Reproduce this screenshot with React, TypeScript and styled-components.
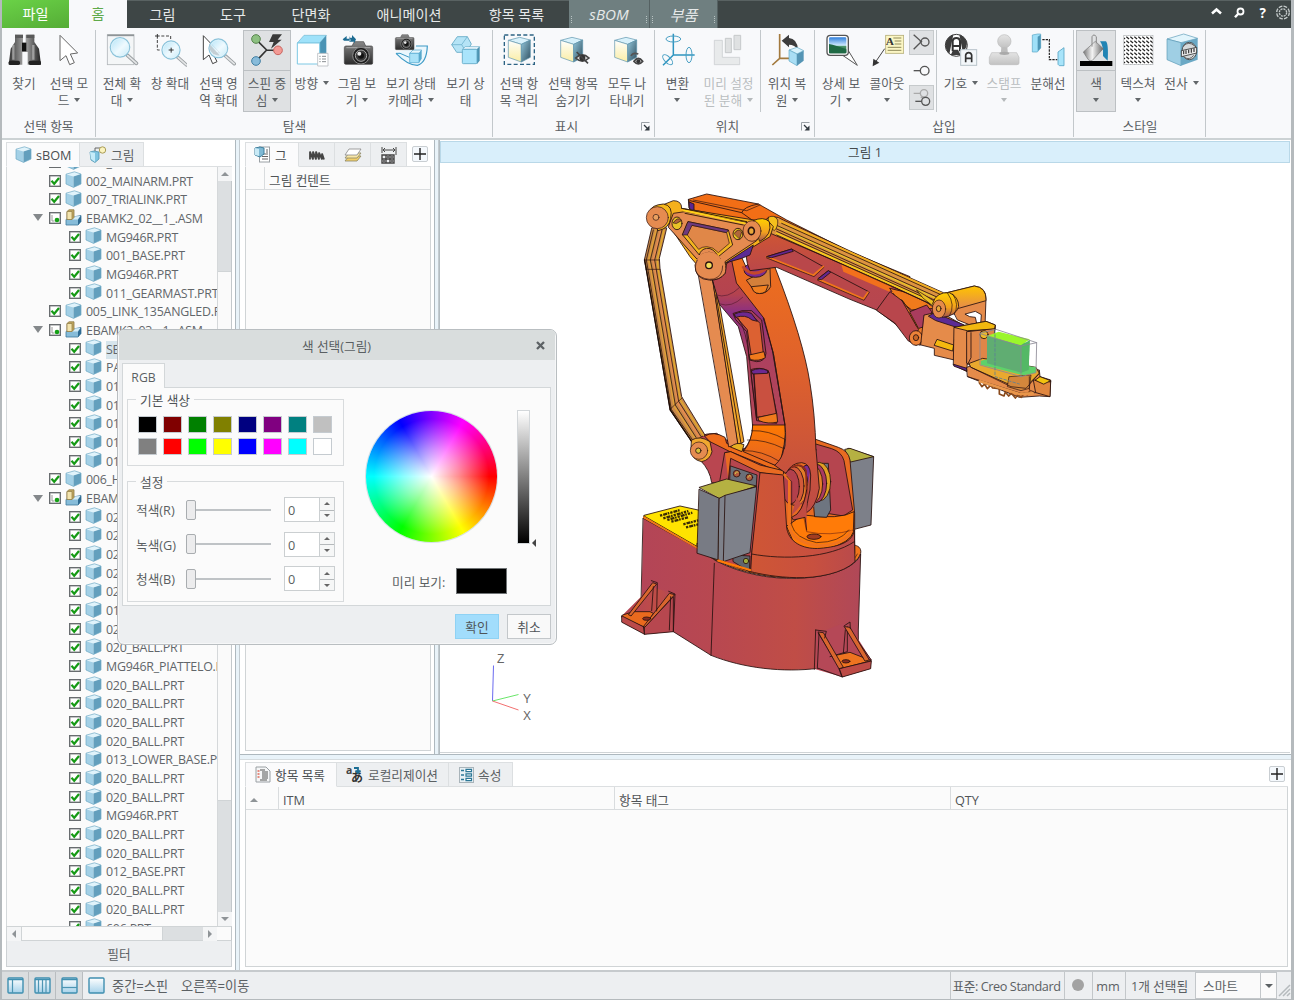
import React from 'react';
import styled, { createGlobalStyle, css } from 'styled-components';

const Global = createGlobalStyle`
  * { box-sizing: border-box; }
  body { margin: 0; overflow: hidden; }
`;

const Win = styled.div`
  width: 1294px; height: 1000px; display: flex; flex-direction: column; overflow: hidden;
  background: #fff; border-left: 2px solid #b5babd; border-right: 3px solid #b5babd; border-bottom: 1px solid #b5babd;
  font-family: "Open Sans", "Noto Sans CJK KR", sans-serif; font-size: 12.7px; color: #5b6063; white-space: nowrap;
`;

/* ---------- menu bar ---------- */
const MenuBar = styled.nav`
  height: 28px; flex: none; display: flex; background: #3e4646; border-top: 1px solid #596262; color: #e6e9e9; font-size: 14.1px;
`;
const MenuTab = styled.div<{ $w: number; $kind?: 'file' | 'active' | 'ctx' }>`
  width: ${p => p.$w}px; display: flex; align-items: center; justify-content: center; padding-bottom: 2px;
  ${p => p.$kind === 'file' && css`background: linear-gradient(165deg, #6ad247, #55ac36); margin-top: -1px; color: #fff;`}
  ${p => p.$kind === 'active' && css`background: #f8f9fb; margin-top: -1px; color: #5faa4a;`}
  ${p => p.$kind === 'ctx' && css`
    background: #6f7f80; font-style: italic; font-size: 15.2px; padding-bottom: 0; margin-top: -1px; border-right: 1px solid #556162; position: relative;
    &::before, &::after { content: ''; position: absolute; bottom: 5px; height: 7px; border-left: 1px dotted #b9c3c3; left: 2px; }
    &::after { left: auto; right: 2px; }
  `}
`;
const MenuTools = styled.div`margin-left: auto; display: flex; svg { display: block; }`;

/* ---------- ribbon ---------- */
const Ribbon = styled.div`height: 110px; flex: none; display: flex; background: #f8f9fb; padding-top: 2px;`;
const Group = styled.section<{ $w: number; $pad?: number }>`
  width: ${p => p.$w}px; flex: none; height: 107px; display: flex; flex-direction: column; border-right: 1px solid #c3c8cb;
  padding-left: ${p => p.$pad ?? 0}px;
`;
const Tools = styled.div`display: flex; height: 82px;`;
const GroupTitle = styled.div<{ $pad?: number; $launch?: boolean }>`
  height: 25px; display: flex; align-items: center; justify-content: center; padding: 2px ${p => (p.$launch ? 14 : 0)}px 0 0;
  margin-left: -${p => p.$pad ?? 0}px; position: relative;
`;
const Launcher = styled.span`
  position: absolute; right: 4px; top: 10px; width: 9px; height: 9px; display: flex;
  svg { display: block; }
`;
const ToolBtn = styled.div<{ $w: number; $on?: boolean; $off?: boolean }>`
  width: ${p => p.$w}px; height: 82px; flex: none; display: flex; flex-direction: column; align-items: center;
  ${p => p.$on && css`background: #dfe1e3; box-shadow: inset 0 0 0 1px #bcc0c3;`}
  ${p => p.$off && css`color: #b9bdbf;`}
`;
const IconBox = styled.div<{ $on?: boolean }>`
  height: 41px; width: 100%; padding-top: 3px; display: flex; justify-content: center; flex: none;
  ${p => p.$on && css`border-bottom: 1px solid #bcc0c3;`}
  svg { display: block; }
`;
const Label = styled.div`margin-top: 4px; height: 33px; display: flex; flex-direction: column; align-items: center;`;
const Line = styled.div`height: 16.5px; line-height: 16.5px; display: flex; align-items: center;`;
const Caret = styled.i<{ $off?: boolean; $gap?: number }>`
  width: 0; height: 0; border: 3.5px solid transparent; border-bottom: 0; border-top: 4.5px solid ${p => (p.$off ? '#b5b9bb' : '#62676a')};
  margin-left: ${p => p.$gap ?? 5}px;
`;
const ToolSep = styled.div<{ $l: number; $r: number }>`width: 1px; background: #c3c8cb; margin: 0 ${p => p.$r}px 0 ${p => p.$l}px;`;
const Stack = styled.div`width: 25px; margin-left: 2px; display: flex; flex-direction: column; justify-content: space-between; height: 80px;`;
const StackBtn = styled.div<{ $on?: boolean }>`
  height: 25px; ${p => p.$on && css`background: #dfe1e3; box-shadow: inset 0 0 0 1px #c6cacc;`} svg { display: block; }
`;

const Icon = ({ cx, children }: { cx: number; children: React.ReactNode }) => (
  <svg width="34" height="34" viewBox={`${cx - 51} 99 102 102`} fill="none">{children}</svg>
);

type ToolProps = { w: number; cx: number; l1: string; l2?: string; c1?: boolean; c2?: boolean; on?: boolean; off?: boolean; children: React.ReactNode };
const Tool = ({ w, cx, l1, l2, c1, c2, on, off, children }: ToolProps) => (
  <ToolBtn $w={w} $on={on} $off={off}>
    <IconBox $on={on}><Icon cx={cx}>{children}</Icon></IconBox>
    <Label>
      <Line>{l1}{c1 && <Caret $off={off} />}</Line>
      <Line>{l2}{c2 && <Caret $off={off} $gap={l2 ? 5 : 0} />}</Line>
    </Label>
  </ToolBtn>
);

const Launch = () => (
  <Launcher><svg width="9" height="9" viewBox="0 0 9 9" fill="none"><path d="M.5 8.5V.5h8" stroke="#9aa0a6" /><path d="M3 3l4 4" stroke="#333a40" strokeWidth="1.3" /><path d="M8.500 3.500v5h-5z" fill="#333a40" /></svg></Launcher>
);

const DefsSvg = styled.svg`position: absolute; width: 0; height: 0;`;
const Defs = () => (
  <DefsSvg>
    <defs>
      <linearGradient id="blk" x1="0" x2="1"><stop offset="0" stopColor="#333" /><stop offset=".5" stopColor="#aaa" /><stop offset="1" stopColor="#222" /></linearGradient>
      <linearGradient id="blkv" x1="0" x2="0" y1="0" y2="1"><stop offset="0" stopColor="#888" /><stop offset="1" stopColor="#2c2c2c" /></linearGradient>
      <linearGradient id="lens" x1="0" y1="0" x2="1" y2="1"><stop offset="0" stopColor="#a9e0f6" /><stop offset=".55" stopColor="#eefaff" /><stop offset="1" stopColor="#bfe8f7" /></linearGradient>
      <linearGradient id="cubeR" x1="0" y1="0" x2="1" y2="1"><stop offset="0" stopColor="#93c6da" /><stop offset="1" stopColor="#2f4f60" /></linearGradient>
      <linearGradient id="cubeL" x1="0" y1="0" x2="0" y2="1"><stop offset="0" stopColor="#ffffff" /><stop offset=".35" stopColor="#fdf8dc" /><stop offset="1" stopColor="#fbeea6" /></linearGradient>
      <linearGradient id="grey" x1="0" y1="0" x2="0" y2="1"><stop offset="0" stopColor="#e4e4e4" /><stop offset="1" stopColor="#c2c2c2" /></linearGradient>
      <linearGradient id="bucket" x1="0" y1="0" x2="1" y2="0"><stop offset="0" stopColor="#777" /><stop offset=".45" stopColor="#f4f4f4" /><stop offset="1" stopColor="#666" /></linearGradient>
      <linearGradient id="sky" x1="0" y1="0" x2="0" y2="1"><stop offset="0" stopColor="#2f7fdc" /><stop offset=".5" stopColor="#cfeaff" /><stop offset=".55" stopColor="#4f9b6e" /><stop offset="1" stopColor="#184b33" /></linearGradient>
      <pattern id="hatch" width="12" height="12" patternUnits="userSpaceOnUse"><path d="M1 2l8 7" stroke="#222" strokeWidth="4" /></pattern>
      <linearGradient id="mini" x1="0" y1="0" x2="0" y2="1"><stop offset="0" stopColor="#fff" /><stop offset="1" stopColor="#a6d2ea" /></linearGradient>
    </defs>
  </DefsSvg>
);

const Magnifier = ({ x, y, r = 28 }: { x: number; y: number; r?: number }) => (
  <g>
    <path d={`M${x + r * 0.75} ${y + r * 0.8}l${r * 0.95} ${r * 0.85}`} stroke="#9a9fa2" strokeWidth={r * 0.38} strokeLinecap="round" />
    <path d={`M${x + r * 0.8} ${y + r * 0.85}l${r * 0.9} ${r * 0.8}`} stroke="#e4e6e7" strokeWidth={r * 0.18} strokeLinecap="round" />
    <circle cx={x} cy={y} r={r} fill="url(#lens)" fillOpacity=".9" stroke="#8cc3da" strokeWidth="4" />
    <circle cx={x} cy={y} r={r - 3} stroke="#dff4fc" strokeWidth="2.500" />
  </g>
);
const Camera = ({ x, y, s = 1 }: { x: number; y: number; s?: number }) => (
  <g transform={`translate(${x} ${y}) scale(${s})`}>
    <path d="M0 18q0-5 5-5h18l7-13h28l6 13h17q4 0 4 5v46q0 4-4 4H5q-5 0-5-4z" fill="url(#blkv)" stroke="#444" strokeWidth="2" />
    <path d="M6 18h72" stroke="#aaa" strokeWidth="3" />
    <circle cx="50" cy="42" r="25" fill="#1d1d1d" stroke="#8a8a8a" strokeWidth="3" /><circle cx="50" cy="42" r="17" fill="#3b3b3b" stroke="#aaa" strokeWidth="3" />
    <circle cx="50" cy="42" r="9" fill="#111" /><circle cx="45" cy="36" r="6" fill="#e9e9e9" />
  </g>
);
const Shaded = ({ x }: { x: number }) => (
  <g stroke="#5b93ab" strokeWidth="2" strokeLinejoin="round">
    <path d={`M${x} 121l34-9 32 8-27 13z`} fill="#d8f1fb" /><path d={`M${x} 121l39 12v53l-39-14z`} fill="url(#cubeL)" />
    <path d={`M${x + 39} 133l27-13v52l-27 14z`} fill="url(#cubeR)" />
  </g>
);

const RibbonBar = () => (
  <Ribbon>
    <Group $w={94}>
      <Tools>
        <Tool w={44} cx={72} l1="찾기">
          <path d="M45 104h24v24h8v-24h26v22l14 20 6 48H83v-38H67v38H26l6-48 13-20z" fill="url(#blk)" />
          <path d="M45 104h24v10H45zM79 104h24v10H79z" fill="#5a5a5a" /><path d="M66 128h13v26H66z" fill="#111" />
          <rect x="26" y="182" width="34" height="13" rx="5" fill="#222" /><rect x="86" y="182" width="37" height="13" rx="5" fill="#222" />
          <path d="M40 135v44M100 135v44" stroke="#c8c8c8" strokeWidth="7" opacity=".6" />
        </Tool>
        <Tool w={46} cx={207} l1="선택 모" l2="드" c2>
          <path d="M180 106v76l18-15 11 27 14-6-12-26 22-3z" fill="#fff" stroke="#666" strokeWidth="3" />
        </Tool>
      </Tools>
      <GroupTitle>선택 항목</GroupTitle>
    </Group>
    <Group $w={397} $pad={2}>
      <Tools>
        <Tool w={48} cx={366} l1="전체 확" l2="대" c2>
          <rect x="322" y="104" width="80" height="90" fill="#f4f6f7" stroke="#b2b7ba" strokeWidth="2.500" /><path d="M322 106h80" stroke="#8f9497" strokeWidth="5" /><Magnifier x={360} y={142} r={29} />
        </Tool>
        <Tool w={48} cx={510} l1="창 확대">
          <path d="M472 102v14M465 108h14" stroke="#333" strokeWidth="3" /><path d="M484 108h28v10M472 120v30h12" stroke="#444" strokeWidth="3" strokeDasharray="9 5" />
          <Magnifier x={513} y={150} r={27} /><path d="M506 150h15M513.500 143v15" stroke="#333" strokeWidth="3" />
        </Tool>
        <Tool w={49} cx={658} l1="선택 영" l2="역 확대">
          <path d="M611 107v72l17-14 11 26 13-6-12-24 20-3z" fill="#fff" stroke="#444" strokeWidth="3" /><Magnifier x={656} y={145} r={28} />
          <path d="M630 133l30 33a28 28 0 0 1-30-18z" fill="#bcc6ca" opacity=".8" />
        </Tool>
        <Tool w={48} cx={801} l1="스핀 중" l2="심" c2 on>
          <path d="M768 118l32 32 32 1M800 150l-30 32" stroke="#333" strokeWidth="5" />
          <path d="M818 103h28l-13 16h12l-32 27 8-20h-14z" fill="#3a3a3a" />
          <circle cx="768" cy="117" r="13" fill="#8dc081" stroke="#58854e" strokeWidth="3" /><circle cx="834" cy="151" r="13" fill="#f39a95" stroke="#c96660" strokeWidth="3" /><circle cx="768" cy="183" r="13" fill="#88bbda" stroke="#427fa3" strokeWidth="3" />
        </Tool>
        <Tool w={42} cx={936} l1="방향" c1>
          <path d="M892 129l20-23h67l-20 23z" fill="#9fe2fa" stroke="#73b8d2" strokeWidth="2" /><path d="M959 129l20-23v62l-20 24z" fill="#4a93b4" /><path d="M892 129h67v63h-67z" fill="#fff" stroke="#7cc8e4" strokeWidth="3" />
          <path d="M953 160h31v38h-31z" fill="#fff" stroke="#b9bdc0" strokeWidth="2.500" /><path d="M958 169h4m4 0h12m-20 8h4m4 0h12m-20 8h4m4 0h12" stroke="#8a8f92" strokeWidth="3" />
        </Tool>
        <Tool w={48} cx={1071} l1="그림 보" l2="기" c2>
          <Camera x={1033} y={125} />
          <path d="M1028 118l12-10v8h8v-8l4 14h-20zM1068 118l-12-13v8h-6l-2 12h14v6z" fill="#1e6c92" />
        </Tool>
        <Tool w={60} cx={1233} l1="보기 상태" l2="카메라" c2>
          <path d="M1188 160q35 36 64 36 28-8 30-58h-34" fill="#eaf7fd" stroke="#3c9ac6" strokeWidth="3.500" /><path d="M1188 160h12l28 12" stroke="#3c9ac6" strokeWidth="3" />
          <path d="M1229 160l10-10h26l-8 10z" fill="#e5f7fd" stroke="#4ba4cd" strokeWidth="2" /><path d="M1229 160h28v28h-28z" fill="#a9e2f8" stroke="#4ba4cd" strokeWidth="2" /><path d="M1257 160l8-10v26l-8 12z" fill="#57a9cc" />
          <Camera x={1186} y={104} s={0.66} />
        </Tool>
        <Tool w={49} cx={108} l1="보기 상" l2="태">
          <path d="M65 134l17-24h30l12 22-15 25H80z" fill="#b5e4f6" stroke="#5fa7c4" strokeWidth="2.500" /><path d="M65 134h30l17-24M95 134l14 23" stroke="#5fa7c4" strokeWidth="2" />
          <path d="M97 148l9-8h43l-8 8z" fill="#effaff" stroke="#5fa7c4" strokeWidth="2" /><path d="M141 148l8-8v42l-8 10z" fill="#4c93b2" /><rect x="97" y="148" width="44" height="43" rx="3" fill="#a9e4fb" stroke="#5fa7c4" strokeWidth="2.500" />
        </Tool>
      </Tools>
      <GroupTitle $pad={1}>탐색</GroupTitle>
    </Group>
    <Group $w={162}>
      <Tools>
        <Tool w={52} cx={267} l1="선택 항" l2="목 격리"><rect x="223" y="105" width="90" height="88" stroke="#2c6384" strokeWidth="4" strokeDasharray="12 7" /><Shaded x={235} /></Tool>
        <Tool w={56} cx={429} l1="선택 항목" l2="숨기기">
          <Shaded x={392} /><path d="M437 174q20-19 40 0-20 19-40 0z" fill="#ddd" stroke="#444" strokeWidth="5" /><circle cx="457" cy="174" r="9" fill="#333" /><path d="M440 156l34 34" stroke="#444" strokeWidth="5" />
        </Tool>
        <Tool w={52} cx={591} l1="모두 나" l2="타내기">
          <Shaded x={554} /><path d="M603 168q6-12 22-6" stroke="#555" strokeWidth="5" /><path d="M612 184q13-18 26 0-13 15-26 0z" fill="#ddd" stroke="#444" strokeWidth="5" /><circle cx="625" cy="184" r="6" fill="#333" />
        </Tool>
      </Tools>
      <GroupTitle $launch>표시<Launch /></GroupTitle>
    </Group>
    <Group $w={160}>
      <Tools>
        <Tool w={45} cx={741} l1="변환" c2>
          <path d="M727 101v64h64M727 165l-31 31" stroke="#2e95c0" strokeWidth="4.500" /><ellipse cx="727" cy="117" rx="22" ry="9" stroke="#4aa0c4" strokeWidth="3" /><ellipse cx="774" cy="165" rx="9" ry="23" stroke="#4aa0c4" strokeWidth="3" />
          <ellipse cx="710" cy="179" rx="19" ry="9" stroke="#4aa0c4" strokeWidth="3" transform="rotate(45 710 179)" />
        </Tool>
        <Tool w={57} cx={894} l1="미리 설정" l2="된 분해" c2 off>
          <path d="M850 121h24v51h52v22h-76z" fill="#e8eaeb" stroke="#cdd0d2" strokeWidth="2.500" /><path d="M883 115h18v43h-18zM909 106h20v43h-20z" fill="#dfe1e2" stroke="#c6c9cb" strokeWidth="3" />
        </Tool>
        <ToolSep $l={3} $r={0} />
        <Tool w={52} cx={1071} l1="위치 복" l2="원" c2>
          <path d="M1049 102v73h55M1049 175l-22 20" stroke="#a37a3e" strokeWidth="5" /><path d="M1055 122l22-18v10q24 2 27 34-10-14-27-14v8z" fill="#3d3d3d" />
          <path d="M1077 150l24-8 20 10-20 10z" fill="#d9f3fd" stroke="#5fa7c4" strokeWidth="2" /><path d="M1077 150l24 12v35l-24-14z" fill="#a9def5" stroke="#5fa7c4" strokeWidth="2" /><path d="M1101 162l20-10v30l-20 15z" fill="#5595b5" />
        </Tool>
      </Tools>
      <GroupTitle $launch>위치<Launch /></GroupTitle>
    </Group>
    <Group $w={259}>
      <Tools>
        <Tool w={52} cx={1233} l1="상세 보" l2="기" c2>
          <path d="M1238 166l44 30-27-44" fill="#fff" stroke="#555" strokeWidth="3" /><rect x="1191" y="106" width="64" height="60" rx="10" fill="#fff" stroke="#555" strokeWidth="4" /><rect x="1197" y="112" width="52" height="48" rx="4" fill="url(#sky)" /><path d="M1197 132q20 4 52 16v12h-52z" fill="#1f6a45" />
        </Tool>
        <Tool w={40} cx={99} l1="콜아웃" c2>
          <rect x="95" y="106" width="54" height="54" fill="#fbf6c4" stroke="#b5ae79" strokeWidth="2.500" /><path d="M118 114h24M122 123h20M122 132h20M101 142h41M101 151h41" stroke="#8f8a5a" strokeWidth="3" />
          <text x="95" y="136" fontFamily="Liberation Serif" fontWeight="bold" fontSize="34" fill="#333">A</text><path d="M92 146l-26 38" stroke="#444" strokeWidth="3" /><path d="M56 199l2-23 18 12z" fill="#333" />
        </Tool>
        <Stack>
          <StackBtn $on><svg width="25" height="25" viewBox="165 90 75 75" fill="none" stroke="#555" strokeWidth="4"><path d="M179 104l22 20h-4M179 148l22-22" /><circle cx="213" cy="126" r="12" /></svg></StackBtn>
          <StackBtn><svg width="25" height="25" viewBox="165 173 75 75" fill="none" stroke="#555" strokeWidth="4"><path d="M179 211h20" /><circle cx="212" cy="211" r="13" /></svg></StackBtn>
          <StackBtn $on><svg width="25" height="25" viewBox="165 255 75 75" fill="none" strokeWidth="4"><path d="M179 280h20M200 292l10 2" stroke="#aaa" /><circle cx="210" cy="280" r="11" stroke="#aaa" /><path d="M184 304h20" stroke="#555" /><circle cx="215" cy="304" r="12" stroke="#555" fill="#dfe1e3" /></svg></StackBtn>
        </Stack>
        <ToolSep $l={2} $r={3} />
        <Tool w={42} cx={321} l1="기호" c1>
          <circle cx="307" cy="136" r="33" fill="#fff" stroke="#3d3d3d" strokeWidth="3" /><path d="M276 125q8-18 22-21l-12 58q-16-16-10-37zM338 125q-8-18-22-21l10 50q16-12 12-29zM290 165h30l-8-16h-14z" fill="#3d3d3d" />
          <path d="M296 154v-32q2-8 11-8t11 8v32M296 138h22" stroke="#333" strokeWidth="6" /><rect x="320" y="149" width="48" height="47" fill="#f3f7fa" stroke="#b8c3ca" strokeWidth="3" /><path d="M335 187v-22q2-7 9-7t9 7v22M335 175h18" stroke="#333" strokeWidth="5" />
        </Tool>
        <Tool w={44} cx={450} l1="스탬프" c2 off>
          <circle cx="451" cy="124" r="20" fill="url(#grey)" stroke="#bbb" strokeWidth="2" /><path d="M442 142h18l2 22h-22z" fill="#bdbdbd" /><path d="M413 158h75l7 14v17q0 5-6 5h-77q-6 0-6-5v-17z" fill="url(#grey)" stroke="#bdbdbd" strokeWidth="2" /><ellipse cx="451" cy="160" rx="15" ry="5" fill="#aaa" />
        </Tool>
        <Tool w={44} cx={582} l1="분해선">
          <path d="M535 105l16-3h9v42l-10 12h-15z" fill="#9fe0f8" stroke="#57a5c4" strokeWidth="2" /><path d="M551 110l9-6v40l-9 10z" fill="#4d96b6" /><path d="M565 119h21v60h24" stroke="#222" strokeWidth="3.500" strokeDasharray="7 3" /><path d="M612 156l18-13v54h-14l-4-4z" fill="#a8e4fa" stroke="#57a5c4" strokeWidth="2.500" />
        </Tool>
      </Tools>
      <GroupTitle>삽입</GroupTitle>
    </Group>
    <Group $w={132} $pad={2}>
      <Tools>
        <Tool w={40} cx={726} l1="색" c2 on>
          <path d="M738 124h18q8 8 5 58l-14-14q2-30-9-44z" fill="#2184b4" /><path d="M688 156l36-32 24 22-34 36q-6 3-12-4z" fill="url(#bucket)" stroke="#777" strokeWidth="2" /><path d="M714 140v-30q5-10 13 0v20" stroke="#888" strokeWidth="3" /><rect x="678" y="183" width="97" height="15" fill="#000" />
        </Tool>
        <Tool w={44} cx={852} l1="텍스쳐" c2><rect x="809" y="106" width="88" height="88" fill="#fff" stroke="#b6babc" strokeWidth="2" /><rect x="810" y="107" width="86" height="86" fill="url(#hatch)" /></Tool>
        <Tool w={43} cx={981} l1="전사" c1>
          <path d="M936 117l50-15 42 13-50 13z" fill="#e2f5fc" stroke="#5a9ab6" strokeWidth="2" /><path d="M936 117l42 11v69l-42-18z" fill="#9fcfe4" stroke="#5a9ab6" strokeWidth="2" /><path d="M978 128l50-13v64l-50 18z" fill="#6ba9c5" />
          <ellipse cx="1003" cy="153" rx="22" ry="26" fill="#d5d9da" stroke="#4a4f52" strokeWidth="3" /><path d="M979 152l46-10v17l-46 11z" fill="#eee" stroke="#333" strokeWidth="2.500" /><path d="M986 152v11M993 151v11M1001 149v11M1009 147v11M1017 145v11" stroke="#333" strokeWidth="3.500" /><path d="M985 138q16-16 34 0M988 172q16 10 28-6" stroke="#666" strokeWidth="3" />
        </Tool>
      </Tools>
      <GroupTitle $pad={1}>스타일</GroupTitle>
    </Group>
  </Ribbon>
);

/* ---------- shared panel parts ---------- */
const Body = styled.main`flex: 1; min-height: 0; display: flex; border-top: 2px solid #ccd2d4;`;
const TabStrip = styled.div<{ $h?: number }>`height: ${p => p.$h ?? 26}px; flex: none; display: flex; align-items: stretch;`;
const Tab = styled.div<{ $w: number; $on?: boolean; $dx?: number }>`
  width: ${p => p.$w}px; display: flex; align-items: center; gap: 4px; padding-left: ${p => p.$dx ?? 8}px; overflow: hidden; flex: none;
  background: #edeff1; border: 1px solid #dcdfe1; border-left: 0;
  ${p => p.$on && css`background: #fbfbfc; border-bottom-color: #fbfbfc; border-left: 1px solid #dcdfe1; color: #4b4f52;`}
`;
const TabFill = styled.div`flex: 1; border-bottom: 1px solid #dcdfe1; display: flex; justify-content: flex-end; align-items: center;`;
const PlusBox = styled.div<{ $r?: number }>`
  width: 16px; height: 16px; border: 1px solid #c9ced2; background: #f5f9fd; border-radius: 2px; margin-right: ${p => p.$r ?? 0}px; margin-bottom: 1px;
  svg { display: block; }
`;
const Plus = ({ r }: { r?: number }) => (
  <PlusBox $r={r}><svg width="14" height="14" viewBox="0 0 14 14"><path d="M7 1v12M1 7h12" stroke="#222" strokeWidth="1.400" /></svg></PlusBox>
);
const VSplit = styled.div`width: 5px; flex: none; background: #e9f3f9; border-left: 1px solid #aeb8be; border-right: 1px solid #c3cbd0;`;
const HSplit = styled.div`height: 6px; flex: none; background: #e9f3f9; border-top: 1px solid #aeb8be; border-bottom: 1px solid #d6dcdf;`;

const Cube = ({ s = 17 }: { s?: number }) => (
  <svg width={s} height={s} viewBox="0 0 17 17">
    <path d="M1 3.200L9.500.8 16 3l-7.500 2.600z" fill="#e0f3fb" /><path d="M1 3.200l7.500 2.400V16.400L1 13z" fill="#a3d0e6" /><path d="M8.500 5.600L16 3v10l-7.500 3.400z" fill="#639fbd" />
    <path d="M1 3.200L9.500.8 16 3v10l-7.500 3.400L1 13z" fill="none" stroke="#6fa9c4" strokeWidth=".7" />
  </svg>
);
const Asm = () => (
  <svg width="17" height="17" viewBox="0 0 17 17">
    <path d="M1 10.500L8 8l8-1.500v6L13 16H1z" fill="#86bcd9" stroke="#3d789c" strokeWidth=".8" /><path d="M1.500 10.500L9 7.500l6.500-.5-2.500 3.500z" fill="#d4edf9" /><path d="M13 10.500l3-4v6L13 16z" fill="#2f6b93" />
    <path d="M2 2.500L4 .8h5v7.700l-2 2H2z" fill="#c4a95f" stroke="#8d7a45" strokeWidth=".8" /><path d="M2 2.500h5v8H2z" fill="#f3e4ad" stroke="#8d7a45" strokeWidth=".7" />
  </svg>
);

/* ---------- left tree ---------- */
const LeftCol = styled.div`width: 233px; flex: none; padding: 2px 3px 3px 4px; display: flex; flex-direction: column;`;
const TreeFrame = styled.div`flex: 1; min-height: 0; display: flex; border-left: 1px solid #d5d9db; border-right: 1px solid #c3c8cb; background: #fbfbfb;`;
const TreeClip = styled.div`flex: 1; min-width: 0; overflow: hidden;`;
const Rows = styled.div`margin-top: -14.4px;`;
const Row = styled.div<{ $deep: boolean }>`
  height: 18.68px; display: flex; align-items: center; padding-left: ${p => (p.$deep ? 46 : 26)}px; letter-spacing: -0.22px; font-size: 12.4px; color: #62666a;
`;
const Twist = styled.i<{ $show?: boolean }>`
  width: 0; height: 0; border: 5px solid transparent; border-top: 7px solid ${p => (p.$show ? '#84888b' : 'transparent')}; border-bottom: 0; margin-right: 6px;
`;
const Check = styled.span`
  width: 12px; height: 12px; border: 1px solid #686c6f; background: #fff; margin-right: 4px; flex: none; display: flex; box-shadow: inset 0 0 0 .5px #8a8e90;
  svg { display: block; overflow: visible; }
`;
const Cell = styled.span`width: 17px; margin-right: 4px; display: flex; flex: none; margin-top: -1.500px;`;
const Name = styled.span<{ $sel?: boolean }>`line-height: 18px; margin-top: 2px; ${p => p.$sel && css`background: #d7e5ec;`}`;

const ScrollV = styled.div`width: 14px; flex: none; display: flex; flex-direction: column; justify-content: space-between; background: #dcdfe1; border-left: 1px solid #d5d8da;`;
const ScrollBtn = styled.div`width: 14px; height: 14px; flex: none; background: #f4f5f6; display: flex; align-items: center; justify-content: center;`;
const Tri = styled.i<{ $d: 'u' | 'd' | 'l' | 'r'; $s?: number; $c?: string }>`
  width: 0; height: 0; border: ${p => p.$s ?? 4}px solid transparent;
  ${p => p.$d === 'u' && css`border-top: 0; border-bottom-color: ${p.$c ?? '#8f9497'};`}
  ${p => p.$d === 'd' && css`border-bottom: 0; border-top-color: ${p.$c ?? '#8f9497'};`}
  ${p => p.$d === 'l' && css`border-left: 0; border-right-color: ${p.$c ?? '#8f9497'};`}
  ${p => p.$d === 'r' && css`border-right: 0; border-left-color: ${p.$c ?? '#8f9497'};`}
`;
const TrackV = styled.div`flex: 1; padding-top: 90px;`;
const ThumbV = styled.div`height: 530px; background: #fafafa; border: 1px solid #d0d4d6; border-width: 1px 0;`;
const ScrollH = styled.div`height: 15px; flex: none; display: flex; background: #fbfbfb; border: 1px solid #d0d4d6; border-right-color: #c3c8cb;`;
const TrackH = styled.div`width: 182px; background: #dcdfe1;`;
const ThumbH = styled.div`width: 142px; height: 100%; background: #fafafa; border: 1px solid #d0d4d6; border-width: 0 1px;`;
const Filter = styled.div`height: 26px; flex: none; display: flex; align-items: center; justify-content: center; background: #edeff1; border: 1px solid #cdd1d4; border-top: 0; padding-bottom: 1px;`;

type Item = [string, number, ('asm' | 'sel')?];
const items: Item[] = [
  ['001_BASE.PRT', 0], ['002_MAINARM.PRT', 0], ['007_TRIALINK.PRT', 0], ['EBAMK2_02__1_.ASM', 0, 'asm'],
  ['MG946R.PRT', 1], ['001_BASE.PRT', 1], ['MG946R.PRT', 1], ['011_GEARMAST.PRT', 1], ['005_LINK_135ANGLED.PRT', 0],
  ['EBAMK2_03__1_.ASM', 0, 'asm'], ['SE', 1, 'sel'], ['PA', 1], ['01', 1], ['01', 1], ['01', 1], ['01', 1], ['01', 1],
  ['006_H', 0], ['EBAM', 0, 'asm'], ['02', 1], ['02', 1], ['02', 1], ['02', 1], ['02', 1], ['01', 1], ['02', 1],
  ['020_BALL.PRT', 1], ['MG946R_PIATTELO.PRT', 1], ['020_BALL.PRT', 1], ['020_BALL.PRT', 1], ['020_BALL.PRT', 1], ['020_BALL.PRT', 1],
  ['013_LOWER_BASE.PRT', 1], ['020_BALL.PRT', 1], ['020_BALL.PRT', 1], ['MG946R.PRT', 1], ['020_BALL.PRT', 1], ['020_BALL.PRT', 1],
  ['012_BASE.PRT', 1], ['020_BALL.PRT', 1], ['020_BALL.PRT', 1], ['606.PRT', 1],
];

const Tree = () => (
  <LeftCol>
    <TabStrip $h={25}>
      <Tab $w={74} $on><Cube />sBOM</Tab>
      <Tab $w={64} $dx={9}>
        <svg width="18" height="17" viewBox="0 0 18 17"><path d="M1 6l4-1 5 1v7l-4 3.500L2 14z" fill="#7fc4e0" stroke="#4f95b3" strokeWidth=".8" /><path d="M1 6l5 1v9l-4-3z" fill="#c5ecfa" /><path d="M6 5V2h5" stroke="#666" fill="none" /><circle cx="13.500" cy="4" r="3.200" fill="#fbf3bf" stroke="#a99c58" /></svg>
        그림
      </Tab>
      <TabFill />
    </TabStrip>
    <TreeFrame>
      <TreeClip>
        <Rows>
          {items.map(([n, d, k], i) => (
            <Row key={i} $deep={d === 1}>
              <Twist $show={k === 'asm'} />
              <Check>
                {k === 'asm'
                  ? <svg width="10" height="10" viewBox="0 0 10 10"><path d="M2 2v6h2.500" stroke="#999" fill="none" /><circle cx="7" cy="7" r="2.300" fill="#15a015" /></svg>
                  : <svg width="10" height="10" viewBox="0 0 10 10"><path d="M1.500 4.800l2.700 3L9 2" stroke="#149a14" strokeWidth="2.200" fill="none" /></svg>}
              </Check>
              <Cell>{k === 'asm' ? <Asm /> : <Cube />}</Cell>
              <Name $sel={k === 'sel'}>{n}</Name>
            </Row>
          ))}
        </Rows>
      </TreeClip>
      <ScrollV><ScrollBtn><Tri $d="u" /></ScrollBtn><TrackV><ThumbV /></TrackV><ScrollBtn><Tri $d="d" /></ScrollBtn></ScrollV>
    </TreeFrame>
    <ScrollH><ScrollBtn><Tri $d="l" /></ScrollBtn><TrackH><ThumbH /></TrackH><ScrollBtn><Tri $d="r" /></ScrollBtn></ScrollH>
    <Filter>필터</Filter>
  </LeftCol>
);

/* ---------- right area ---------- */
const RightCol = styled.div`flex: 1; min-width: 0; display: flex; flex-direction: column;`;
const Upper = styled.div`height: 614px; flex: none; display: flex;`;
const Content = styled.div`width: 194px; flex: none; padding: 2px 3px 3px 5px; display: flex; flex-direction: column;`;
const Panel = styled.div`flex: 1; border: 1px solid #d0d4d6; border-top: 0; background: #fbfbfb;`;
const Head = styled.div`height: 23px; display: flex; border-bottom: 1px solid #d9dcde; color: #505457;`;
const HeadCell = styled.div<{ $w?: number }>`
  ${p => (p.$w ? css`width: ${p.$w}px; flex: none;` : css`flex: 1;`)} border-right: 1px solid #d9dcde; display: flex; align-items: center; padding: 3px 0 0 4px;
  &:last-child { border-right: 0; }
`;
const View = styled.div`flex: 1; min-width: 0; display: flex; flex-direction: column; border-left: 1px solid #b3bdc2; background: #fff; padding-right: 1px;`;
const ViewTitle = styled.div`height: 22px; margin-top: 1px; flex: none; background: #d9effb; border: 1px solid #b9d8e8; display: flex; align-items: center; justify-content: center; color: #44494c; padding-bottom: 2px;`;
const Canvas = styled.div`height: 590px; overflow: hidden; border-bottom: 1px solid #d0d4d6; svg { display: block; }`;
const Lower = styled.div`flex: 1; min-height: 0; padding: 2px 3px 3px 5px; display: flex; flex-direction: column;`;

const Robot = () => (
  <svg width="850" height="588" viewBox="440 163 850 588">
    <defs>
      <linearGradient id="bs" x1="0" x2="1"><stop offset="0" stopColor="#b34557" /><stop offset=".35" stopColor="#b84850" /><stop offset=".7" stopColor="#c04d46" /><stop offset="1" stopColor="#b04858" /></linearGradient>
      <linearGradient id="tr" x1="0" x2="1"><stop offset="0" stopColor="#cf5635" /><stop offset=".6" stopColor="#c8503f" /><stop offset="1" stopColor="#b94a4b" /></linearGradient>
      <linearGradient id="arm" x1="0" x2="0" y1="0" y2="1"><stop offset="0" stopColor="#ee6f1d" /><stop offset=".5" stopColor="#e1632a" /><stop offset="1" stopColor="#cc5539" /></linearGradient>
      <linearGradient id="armEnd" x1="0" x2="0" y1="0" y2="1"><stop offset="0" stopColor="#cc5539" /><stop offset="1" stopColor="#bd4a46" /></linearGradient>
      <linearGradient id="side" x1="0" x2="0" y1="0" y2="1"><stop offset="0" stopColor="#b9464a" /><stop offset=".17" stopColor="#b4434f" /><stop offset=".26" stopColor="#8b2f83" /><stop offset=".45" stopColor="#ac4060" /><stop offset="1" stopColor="#b94950" /></linearGradient>
      <linearGradient id="org" x1="0" x2="0" y1="0" y2="1"><stop offset="0" stopColor="#ff7a00" /><stop offset="1" stopColor="#e0622a" /></linearGradient>
      <linearGradient id="yel" x1="0" x2="0" y1="0" y2="1"><stop offset="0" stopColor="#ffc400" /><stop offset="1" stopColor="#e58b4b" /></linearGradient>
      <linearGradient id="gold" x1="0" x2="0" y1="0" y2="1"><stop offset="0" stopColor="#ffd000" /><stop offset=".6" stopColor="#f2a01e" /><stop offset="1" stopColor="#a3524f" /></linearGradient>
      <linearGradient id="fore" x1="0" x2="0" y1="0" y2="1"><stop offset="0" stopColor="#d3582f" /><stop offset=".4" stopColor="#ba474a" /><stop offset="1" stopColor="#b24556" /></linearGradient>
    </defs>
    <g transform="translate(610 180) scale(.33333)" fill="none" stroke="#2a1210" strokeWidth="2.600" strokeLinejoin="round" strokeLinecap="round">
      {/* base and turret */}
      <g transform="translate(0 750)">
        <path d="M715 55L791 80 783 285 733 298 700 290 700 70z" fill="#7d8089" /><path d="M705 58l15-3 71 25-69 16z" fill="#b5b142" />
        <path d="M100 265L102 256 210 228 400 270 400 420 320 392 262 357z" fill="#ffe300" />
        <g stroke="#3b2c05" strokeWidth="7" strokeDasharray="7 3 12 2 5 3" strokeLinecap="butt"><path d="M150 257l60-17M160 265l75-22M172 270l75-22M184 275l50-13M220 283l45-12M228 292l37-9" /></g>
        <path d="M262 350L320 392C400 430 480 445 560 443 660 440 740 410 752 370 755 352 742 347 732 345L420 400 380 385 262 340z" fill="#f0761c" />
        <path d="M100 265L262 355 320 394C400 433 480 447 560 445 660 442 740 412 752 372L745 600 745 690 625 715C520 728 400 715 303 676L190 605 93 560z" fill="url(#bs)" />
        <path d="M102 258L262 350M313 400L303 676" /><path d="M102 262L262 354" stroke="#f0761c" strokeWidth="6" /><path d="M340 396C420 432 480 437 560 435 650 433 725 410 742 372" stroke="#4a1a10" strokeWidth="2" />
        {/* feet */}
        <path d="M93 500L120 470 190 490 190 605 104 613 36 577 38 555z" fill="url(#bs)" stroke="none" /><path d="M38 555L70 545 120 545 130 550 104 592 36 562z" fill="#e96a1e" /><path d="M36 558L100 590 104 613 36 577z" fill="#ba4a4a" /><path d="M104 592L190 500 190 605 104 613z" fill="#b7474f" />
        <path d="M56 553L128 458 140 462 64 557zM100 590L178 490 194 494 106 590z" fill="#d9662e" /><path d="M124 452l18 6-2 85M176 484l19 8-5 113M130 470l-5 72M182 500l-4 100" /><ellipse cx="110" cy="566" rx="12" ry="5" fill="#8a2d22" />
        <path d="M617 600L640 603 700 580 720 588 784 690 782 716 697 741 617 718z" fill="#b54857" stroke="none" /><path d="M625 610L690 712 784 690 712 590 712 665 660 680" fill="#b54857" /><path d="M668 678L720 667 784 692 696 715z" fill="#ee7420" /><path d="M688 716L784 693 782 716 697 741z" fill="#bd4b46" />
        <path d="M625 606L640 608 700 712 688 716zM704 590l16 2 58 98-12 3z" fill="#d9662e" /><path d="M617 600l32 4-5 20M617 600l-4 118M627 612l-5 104M702 588l18-12 1 20M706 600l-6 70M688 716l9 25-72-26" /><ellipse cx="708" cy="694" rx="12" ry="5" fill="#8a2d22" />
        {/* turret rear wall */}
        <path d="M617 28L685 52Q715 62 720 90L734 250 734 370 520 370 520 60z" fill="#e86b22" /><path d="M617 42L665 56Q695 66 702 92L728 240 700 258 620 245z" fill="#b5454f" />
        <path d="M580 255Q690 270 732 245L730 305Q725 335 650 358L560 358 530 290z" fill="#ff7b08" />
        <path d="M615 260L650 262 662 240 655 100 600 100z" fill="#6e7580" />
        <ellipse cx="612" cy="320" rx="21" ry="8" fill="#a33d20" /><path d="M580 255L590 305Q660 320 730 300" stroke="#7a2b10" strokeWidth="2" />
        {/* shoulder left housing */}
        <path d="M245 50Q250 10 320 10L350 30 520 118 500 160 330 160 305 158Q300 120 272 92z" fill="#b94650" /><path d="M285 18Q310 2 345 22L350 40 500 105 520 130 440 105 300 35z" fill="#ee6c1b" />
        <path d="M345 68L362 65 520 130 455 140 425 372 422 425 330 390 330 150z" fill="#b7464e" /><path d="M345 68L362 65 450 105 520 122 522 138 451 128 362 85 355 150" fill="#e86b22" />
        {/* gear discs */}
        <ellipse cx="628" cy="155" rx="34" ry="58" fill="#e0a022" /><ellipse cx="618" cy="160" rx="32" ry="58" fill="#a93a62" /><ellipse cx="606" cy="162" rx="32" ry="58" fill="#e57f2a" /><ellipse cx="594" cy="160" rx="30" ry="56" fill="#7e2d90" /><ellipse cx="562" cy="165" rx="32" ry="60" fill="#e37b28" /><ellipse cx="552" cy="168" rx="30" ry="58" fill="#d25a3a" /><ellipse cx="542" cy="170" rx="26" ry="52" fill="#b2404c" />
        {/* turret front */}
        <path d="M451 128L520 135 530 295C540 345 590 358 630 355 690 350 728 335 733 300L735 395C700 430 620 445 560 443 500 442 450 432 422 425L425 372z" fill="url(#tr)" />
        <path d="M425 372C520 390 660 385 733 335" /><path d="M524 135L538 150 538 290Q545 332 620 347 700 347 724 305" stroke="#ef7420" strokeWidth="8" /><path d="M530 138L545 155 545 285Q555 325 620 338 690 337 716 300" strokeWidth="2" />
      </g>

      {/* rear long rod */}
      <path d="M265 280L308 300 385 795 357 800z" fill="#e58b50" /><path d="M308 300L330 380 402 785 385 795z" fill="#f0a52a" /><path d="M318 345L393 790" /><path d="M362 800q18-16 40-6l-6 20z" fill="#e8b021" />

      {/* main arm */}
      <path d="M307 295L365 236 420 300 470 410 525 735 522 812 500 858 400 810Q428 780 428 740L410 530 385 440 330 375z" fill="url(#side)" />
      <path d="M428 735L525 735Q530 790 505 860L400 815Q428 780 428 735z" fill="url(#org)" /><path d="M425 752Q475 750 525 778M412 780Q465 778 520 805M400 812Q455 810 510 845" strokeWidth="2" />
      <path d="M365 236L395 232 410 265 495 262Q580 480 600 610 615 700 618 812L522 812Q530 780 525 735L490 520 462 415 380 310z" fill="url(#arm)" />
      <path d="M410 300L480 265 482 320Q470 345 440 340z" fill="#d4803a" /><path d="M425 320l50-5-8 20q-20 12-35 0z" fill="#f08020" /><ellipse cx="436" cy="270" rx="34" ry="22" fill="#7a2b92" /><path d="M400 262q30 35 75 0" stroke="#c4482c" strokeWidth="9" />
      <path d="M318 345q35 12 70-22M330 372q35 12 68-20" stroke="#5b1c30" strokeWidth="2" />
      <path d="M370 400Q395 388 425 392L455 420 468 520Q465 545 440 545L418 540 410 455 378 420z" fill="#a73c5a" /><path d="M375 405Q400 392 425 405L450 430 460 520 425 535 412 450z" fill="#dc6132" /><path d="M374 402q25-12 50-2l18 24-16-4q-20-18-48-8z" fill="#6c2991" /><path d="M418 525l44-10 4 18q-20 12-44 6z" fill="#f07a1c" />
      <path d="M425 568Q450 560 475 572L500 700 500 730 440 722 424 590z" fill="#a73c5a" /><path d="M432 580l45-3 22 125-58 10z" fill="#c95040" /><path d="M425 572q25-12 48 0v8l-44 2z" fill="#6c2991" /><path d="M432 582L441 710" /><path d="M445 712l55-12 3 26q-28 8-56-4z" fill="#f07a1c" />
      <path d="M385 415Q410 450 418 540L440 720" strokeWidth="2" /><path d="M460 415L490 520 525 735" />

      {/* fork at the arm's foot, and the front motor */}
      <g transform="translate(0 750)">
        <path d="M521 58L618 58 628 175Q622 235 590 248L560 200 545 255Q575 230 590 190L600 125Q600 98 570 98 545 100 528 130L494 106Q518 85 521 58z" fill="url(#armEnd)" stroke="none" />
        <path d="M618 58L628 175Q618 232 590 248M521 58Q518 85 494 106L528 130Q545 98 575 98 600 100 602 135L600 180Q590 225 588 248" /><path d="M545 112Q575 97 588 122L590 190Q580 230 565 255" stroke="#8c2a1c" strokeWidth="5" />
        <path d="M590 180Q580 250 545 262L550 270 585 262 590 300" fill="#c14c42" />
        <path d="M362 108L441 135 438 180 360 152z" fill="#6a6f78" /><circle cx="380" cy="131" r="10" fill="#b55a3c" /><circle cx="418" cy="142" r="10" fill="#b55a3c" /><path d="M376 131a5 6 0 0 1 8-4M414 142a5 6 0 0 1 8-4" stroke="#cde04a" />
        <path d="M370 375L420 378 418 425 370 395z" fill="#5f656e" /><circle cx="408" cy="393" r="8" fill="#9fae3c" />
        <path d="M268 172L350 147 440 168 345 200 328 205z" fill="#b5b142" /><path d="M268 178L328 205 325 390 262 370z" fill="#787b84" /><path d="M328 205L345 196 440 170 420 368 340 395 325 390z" fill="#7e818a" /><path d="M345 197L340 395" /><path d="M325 392L420 420" stroke="#ff7b08" strokeWidth="7" />
      </g>

      {/* forearm beam */}
      <path d="M236 58L290 42 445 72 530 120 720 215 900 290 890 340 440 190 400 120 240 88z" fill="#f26e16" /><path d="M240 62L395 98 440 130M445 72Q400 80 395 98M236 58l2 26 14 14" /><path d="M238 66l14 6v28l-14-16z" fill="#5c2590" />
      <path d="M250 60L410 92 450 75" strokeWidth="2" />
      <path d="M415 190Q430 175 500 130L720 230 850 305 960 375 970 390 950 480 915 495 860 435 800 390 720 358 500 262 420 272Q400 230 415 190z" fill="url(#fore)" />
      <path d="M690 240L850 310 838 335 700 275z" fill="#f2701c" stroke="none" />
      <path d="M470 230L545 207 640 260 610 286z" fill="#b9474a" /><path d="M470 230L610 286 640 260" stroke="#f0761c" strokeWidth="6" /><path d="M470 230L545 207 550 214 485 233z" fill="#632690" /><path d="M623 297L655 272 776 335 760 357z" fill="#b9474a" /><path d="M623 297L760 357 774 337" stroke="#f0761c" strokeWidth="6" /><path d="M623 297L655 272 662 277 636 298z" fill="#632690" /><path d="M470 234L612 290 642 262M623 301L762 361 778 337" strokeWidth="2" />
      <path d="M840 325L920 345 975 385 905 390 860 355z" fill="#f07a1c" /><path d="M808 392L848 338" stroke="#f0761c" strokeWidth="5" />
      <path d="M800 390L840 335 880 365 920 440 950 470 920 495 895 483 855 430z" fill="#b8464c" /><path d="M875 360L945 450Q955 480 930 496L905 480 925 450z" fill="#ec7a2a" /><path d="M900 395l50-20 15 20-8 40-30 10z" fill="#a93c5e" /><ellipse cx="918" cy="474" rx="20" ry="22" fill="#ee8338" /><ellipse cx="918" cy="473" rx="8" ry="9" fill="#c76628" />

      {/* parallel rod to the wrist */}
      <path d="M465 120Q490 100 520 120L720 213 1000 338 985 385 960 372 840 315 720 262 500 168 470 155z" fill="#dd9440" />
      <path d="M510 124L1000 343" stroke="#f2ae22" strokeWidth="7" /><path d="M505 140L985 358" stroke="#e8c02a" strokeWidth="5" /><path d="M500 160L965 366" stroke="#f5c81e" strokeWidth="6" /><path d="M515 130L995 345M502 137L985 353M498 146L975 361M500 154L968 364M500 165L960 371" strokeWidth="2.500" />
      <path d="M475 112q18-10 28 8 2 20-10 32-22-14-18-40z" fill="#f5c01c" strokeWidth="2" />
      <path d="M920 330l70 45-10 12-40-32z" fill="#e9c021" strokeWidth="2" />

      {/* outer left rod */}
      <path d="M125 145L103 240 110 275 180 690 245 785 285 765 215 650 150 265 148 235 170 145z" fill="#c9884a" />
      <path d="M138 150L116 240 124 275 193 680 255 775" stroke="#e0a038" strokeWidth="5" /><path d="M152 150L130 240 136 272 204 670 267 770" stroke="#e58b50" strokeWidth="6" /><path d="M162 150L142 240 145 270 211 660 280 766" stroke="#e2ac2a" strokeWidth="4" />
      <path d="M130 150L109 240 115 275 184 688 248 780M143 150L121 240 128 275 196 675 258 772M156 150L134 240 139 270 206 664 272 768" stroke="#1c0c06" strokeWidth="2.200" /><path d="M103 240h45M108 268h42M180 688l36-34" strokeWidth="2" /><path d="M104 240L110 275 181 690 246 786" stroke="#1c0c06" strokeWidth="4" />
      {/* lower-left pivot */}
      <path d="M245 780Q270 765 300 785L306 815Q300 840 275 845 245 840 243 810z" fill="#f0a830" /><circle cx="267" cy="812" r="26" fill="#e58b50" strokeWidth="2" /><circle cx="265" cy="812" r="8" fill="#d9c03a" />

      {/* triangular link */}
      <path d="M150 78L190 62Q215 62 215 85L445 122 470 118 490 140 480 170 455 185 350 250 345 280Q330 300 300 300L240 230 180 140z" fill="#f5b01c" />
      <path d="M345 250L430 195 420 225 395 235 360 245z" fill="#5c2b94" />
      <path d="M175 140L190 100 225 95 425 130 455 160 440 182 345 245Q350 270 345 280 330 302 297 300 255 298 255 255L262 240z" fill="#e58b50" />
      <path d="M235 125L355 150 368 195 325 230Q310 203 290 205 272 208 268 225L218 165z" fill="#f2b51f" /><path d="M246 136L350 158 358 190 325 218Q310 200 290 200 276 200 266 208L232 165z" fill="#e08748" strokeWidth="2" /><path d="M235 125L355 150 350 158 246 136 232 165 218 165z" fill="#6d3a7e" strokeWidth="2" />
      <ellipse cx="201" cy="130" rx="15" ry="19" fill="#e8c326" /><path d="M190 128q14-20 24-6l-14 8z" fill="#b0653a" strokeWidth="2" /><ellipse cx="384" cy="162" rx="15" ry="17" fill="#e8c326" /><path d="M373 160q12-18 22-4l-6 20z" fill="#b0653a" strokeWidth="2" />
      <path d="M262 236q35-40 70 0" strokeWidth="2.500" /><circle cx="297" cy="257" r="41" fill="#e58b50" stroke="none" /><path d="M262 240Q250 262 262 282 282 302 312 297 338 288 338 258" strokeWidth="2" /><circle cx="297" cy="256" r="10" fill="#f2df5a" strokeWidth="4" />
      <path d="M120 92Q125 75 160 72 190 76 182 115 178 145 145 152z" fill="#f5b81c" /><circle cx="142" cy="113" r="33" fill="#e58b50" strokeWidth="2" /><circle cx="138" cy="112" r="9" fill="#e9a060" strokeWidth="2" />
      <path d="M430 122Q460 108 478 125 488 165 450 184z" fill="url(#gold)" /><ellipse cx="426" cy="153" rx="27" ry="31" fill="#e58b50" strokeWidth="2" /><ellipse cx="424" cy="153" rx="9" ry="11" fill="#e9a83a" strokeWidth="5" />
      <path d="M215 85L410 125M225 100L400 135" stroke="#3a2408" strokeWidth="3" /><path d="M222 92L405 130" stroke="#ffd21a" strokeWidth="5" />

      {/* wrist and gripper */}
      <g transform="translate(688 150)">
        <path d="M255 255L300 245 380 290 345 330 345 390 285 376 285 355 245 345z" fill="#e58b4a" /><path d="M268 258L285 248 375 285 370 298 290 272z" fill="#5c2b94" /><path d="M285 345L293 328 343 345 340 362z" fill="#f5b80f" />
        <path d="M315 190L405 168Q440 172 440 205L437 290 405 290 355 270z" fill="#e58b4a" /><path d="M315 190L405 168Q442 172 440 212L358 235z" fill="url(#yel)" /><path d="M378 252L408 244 426 254 424 282 412 280 408 262 392 260z" fill="#fff" />
        <path d="M280 220Q290 185 330 188 358 200 358 230 350 258 310 262z" fill="url(#gold)" /><path d="M325 190q25 35 5 68M340 192q22 32 4 62" strokeWidth="2" /><ellipse cx="299" cy="237" rx="20" ry="27" fill="#e58b4a" strokeWidth="2" /><ellipse cx="298" cy="236" rx="7" ry="9" fill="#e8a93a" />
        <path d="M345 292L440 274 468 285 468 300 385 305 383 425 343 405z" fill="#e58b4a" /><path d="M345 292L440 274 468 285 465 298 385 302z" fill="#f2b80f" /><path d="M383 305L466 296 460 400 400 410 383 400z" fill="#e08648" /><path d="M395 308v75l-10 20" /><path d="M343 403l40 12v8l-38-14z" fill="#5c2b94" />
        <circle cx="434" cy="314" r="12" fill="#efbb2a" />
        <path d="M383 412L400 405 600 420 602 440 634 450 632 500 600 498 540 502 385 440z" fill="#e58b4a" /><path d="M390 400L430 385 590 412 600 430 560 470 520 468 395 412z" fill="#e9a92f" /><path d="M510 440L575 435 570 475 545 482 505 470z" fill="#d3873c" strokeWidth="2" /><path d="M395 412L515 470 560 475 600 430M385 440L545 490 590 488M570 440v40l15 6M602 440l-15 20 48-6" strokeWidth="2.200" />
        <path d="M583 450L634 456 632 500 590 488z" fill="#e0863e" /><path d="M588 450l14-10 32 12-20 10z" fill="#f2c20f" />
        <path d="M420 458l8 12 8-8 8 14 10-10 6 8 20 2v16l14 6 4-12 10 12 8-8 12 14 8-10 10 8 8-12 10 4 8-12" stroke="#8a4a1c" strokeWidth="5" /><path d="M422 454L540 492 580 490" stroke="#e9964a" strokeWidth="8" />
        <path d="M425 392L445 388 590 412 590 428 552 436 425 404z" fill="#5fd16a" stroke="none" /><path d="M443 318L570 340 568 420 545 428 443 400z" fill="#60ad72" stroke="none" /><path d="M443 318L478 305 572 328 545 346z" fill="#9bf62c" stroke="none" /><path d="M545 346L572 330 568 418 545 428z" fill="#54b866" stroke="none" />
        <g stroke="#8a8894" strokeWidth="2.500"><path d="M422 310L470 298 592 338 545 348zM422 310V405L545 440 590 428 592 338M545 348V440" /><path d="M467 300V440L540 462" strokeDasharray="8 6" stroke="#5c8096" /></g>
      </g>
    </g>
    {/* coordinate triad */}
    <g fill="none" strokeWidth="1"><path d="M492.500 701l1-35.500" stroke="#6a6af0" /><path d="M492.500 701l26-6.500" stroke="#6ae66a" /><path d="M492.500 701l26 9" stroke="#f27070" /></g>
    <g fontFamily="Liberation Sans, sans-serif" fontSize="12" fill="#666"><text x="497" y="662.500">Z</text><text x="523" y="703">Y</text><text x="523" y="719.500">X</text></g>
  </svg>
);

/* ---------- colour dialog ---------- */
const Dialog = styled.div`
  position: absolute; left: 117px; top: 329px; width: 440px; height: 316px; border: 1px solid #b9bec1; border-radius: 7px; background: #edeff1; overflow: hidden;
  display: flex; flex-direction: column; color: #5a5f62; box-shadow: inset 0 0 0 1px #f6f7f8;
`;
const DlgHead = styled.div`
  height: 30px; background: #d9dddd; flex: none; display: grid; grid-template-columns: 1fr 19px; align-items: center; padding-top: 1px; margin: 0 1px;
  span { text-align: center; padding-left: 18px; }
`;
const DlgTab = styled.div`
  width: 43px; height: 25px; margin: 3px 0 -1px 4px; border: 1px solid #d3d7d9; border-bottom: 0; background: #fbfbfb; display: flex; align-items: center; justify-content: center;
  padding-top: 3px; z-index: 1; font-size: 12.2px;
`;
const DlgPanel = styled.div`height: 219px; margin: 0 5px 0 4px; border: 1px solid #d3d7d9; background: #fbfbfb; display: flex; flex: none; padding: 11px 0 0 4px;`;
const LeftSide = styled.div`width: 217px; display: flex; flex-direction: column; gap: 15px;`;
const Box = styled.div<{ $h: number }>`height: ${p => p.$h}px; border: 1px solid #d8dbdd; padding: 0 8px 0 8px;`;
const Legend = styled.div<{ $b?: number }>`width: fit-content; margin: -9px 0 ${p => p.$b ?? 0}px 0; padding: 0 4px; background: #fbfbfb; line-height: 19px; height: 19px; color: #505457;`;
const Swatches = styled.div`display: grid; grid-template-columns: repeat(8, 19px); column-gap: 6px; row-gap: 5px; margin: 6px 0 0 2px;`;
const Swatch = styled.div<{ $c: string }>`height: 17px; background: ${p => p.$c}; border: 1px solid #c5cbd0;`;
const Channel = styled.div`height: 25px; margin-bottom: 9.700px; display: flex; align-items: center; span { width: 50px; }`;
const Rail = styled.div`width: 85px; height: 20px; display: flex; align-items: center; &::after { content: ''; flex: 1; height: 2px; background: #bfc3c6; }`;
const Knob = styled.i`width: 10px; height: 20px; border: 1px solid #a9adb0; border-radius: 2px; background: #ececed;`;
const Spin = styled.div`width: 51px; height: 25px; margin-left: 13px; border: 1px solid #cbcfd1; background: #fff; display: flex; b { flex: 1; font-weight: 400; padding-left: 3px; line-height: 24px; }`;
const SpinBtns = styled.div`width: 15px; border-left: 1px solid #cbcfd1; background: #f6f7f7; display: grid; grid-template-rows: 1fr 1fr; div { display: flex; align-items: center; justify-content: center; } div + div { border-top: 1px solid #b5b9bb; }`;
const RightSide = styled.div`flex: 1; padding-left: 22px;`;
const WheelRow = styled.div`display: flex; margin-top: 12px; height: 134px;`;
const Wheel = styled.div`
  width: 131px; height: 131px; border-radius: 50%; box-shadow: 0 0 0 1px #d5e0e6;
  background: radial-gradient(circle closest-side, #fff 0, rgba(255,255,255,.55) 42%, rgba(255,255,255,0) 88%), conic-gradient(from 90deg, #f00, #ff0, #0f0, #0ff, #00f, #f0f, #f00);
`;
const Bar = styled.div`width: 13px; height: 134px; margin: -1px 0 0 20px; border: 1px solid #d3d7da; background: linear-gradient(#fff, #000);`;
const BarMark = styled.div`display: flex; align-items: flex-end; margin-left: 2px; margin-bottom: -2px;`;
const Preview = styled.div`display: flex; align-items: center; margin: 23px 0 0 26px; gap: 11px;`;
const PreviewBox = styled.div`width: 51px; height: 26px; background: #000; border: 1px solid #707476;`;
const Actions = styled.div`display: flex; justify-content: flex-end; gap: 8px; padding: 8px 5px 0 0;`;
const Btn = styled.button<{ $primary?: boolean }>`
  width: 44px; height: 25px; border: 1px solid ${p => (p.$primary ? '#8fd2f4' : '#c3c7ca')}; background: ${p => (p.$primary ? '#a2ddfc' : '#f9f9f9')}; color: #4f5457; font: inherit; padding: 0 0 1px;
`;
const palette = ['#000', '#800000', '#008000', '#808000', '#000080', '#800080', '#008080', '#c0c0c0', '#808080', '#f00', '#0f0', '#ff0', '#00f', '#f0f', '#0ff', '#fff'];

const ColorDialog = () => (
  <Dialog>
    <DlgHead><span>색 선택(그림)</span><svg width="9" height="9" viewBox="0 0 9 9"><path d="M1 1l7 7M8 1L1 8" stroke="#5d6265" strokeWidth="2.300" /></svg></DlgHead>
    <DlgTab>RGB</DlgTab>
    <DlgPanel>
      <LeftSide>
        <Box $h={67}><Legend>기본 색상</Legend><Swatches>{palette.map(c => <Swatch key={c} $c={c} />)}</Swatches></Box>
        <Box $h={121}>
          <Legend $b={5}>설정</Legend>
          {['적색(R)', '녹색(G)', '청색(B)'].map(n => (
            <Channel key={n}><span>{n}</span><Rail><Knob /></Rail>
              <Spin><b>0</b><SpinBtns><div><Tri $d="u" $s={3} $c="#666" /></div><div><Tri $d="d" $s={3} $c="#666" /></div></SpinBtns></Spin>
            </Channel>
          ))}
        </Box>
      </LeftSide>
      <RightSide>
        <WheelRow><Wheel /><Bar /><BarMark><Tri $d="l" $s={4} $c="#444" /></BarMark></WheelRow>
        <Preview>미리 보기:<PreviewBox /></Preview>
      </RightSide>
    </DlgPanel>
    <Actions><Btn $primary>확인</Btn><Btn>취소</Btn></Actions>
  </Dialog>
);

/* ---------- status bar ---------- */
const Status = styled.footer`height: 29px; flex: none; display: flex; align-items: stretch; background: #edeff1; border-top: 2px solid #c6cacd;`;
const Toggle = styled.div<{ $off?: boolean }>`
  width: 27px; display: flex; align-items: center; justify-content: center; ${p => !p.$off && css`background: #dadddf; border-right: 1px solid #b9bdc0;`}
`;
const Msg = styled.div`display: flex; align-items: center; gap: 13px; flex: 1; padding-left: 2px; font-size: 13.2px;`;
const Seg = styled.div<{ $w: number }>`width: ${p => p.$w}px; flex: none; border-left: 1px solid #c3c7ca; display: flex; align-items: center; justify-content: center; padding-right: 2px; letter-spacing: ${p => (p.$w > 100 ? -0.42 : 0)}px;`;
const Dot = styled.i`width: 12px; height: 12px; border-radius: 50%; background: #a2a2a2; margin-top: -2px;`;
const Select = styled.div`width: 82px; border: 1px solid #c3c7ca; background: #fafafa; display: flex; align-items: center; span { flex: 1; padding: 0 0 1px 7px; } `;
const SelArrow = styled.div`width: 16px; align-self: stretch; border-left: 1px solid #c3c7ca; display: flex; align-items: center; justify-content: center;`;
const MiniWin = ({ d }: { d?: string }) => (
  <svg width="17" height="17" viewBox="0 0 17 17"><rect x="1" y="1" width="15" height="15" rx="1" fill="url(#mini)" stroke="#3f8fb0" strokeWidth="1.400" />{d && <><path d="M1 2.500h15" stroke="#3f8fb0" strokeWidth="1.500" /><path d={d} stroke="#4d95b3" strokeWidth="1.200" fill="none" /></>}</svg>
);

export default function App() {
  return (
    <Win>
      <Global />
      <Defs />
      <MenuBar>
        <MenuTab $w={67} $kind="file">파일</MenuTab>
        <MenuTab $w={58} $kind="active">홈</MenuTab>
        <MenuTab $w={71}>그림</MenuTab>
        <MenuTab $w={70}>도구</MenuTab>
        <MenuTab $w={86}>단면화</MenuTab>
        <MenuTab $w={110}>애니메이션</MenuTab>
        <MenuTab $w={105}>항목 목록</MenuTab>
        <MenuTab $w={81} $kind="ctx">sBOM</MenuTab>
        <MenuTab $w={68} $kind="ctx">부품</MenuTab>
        <MenuTools>
          <svg width="84" height="27" viewBox="1207 1 84 27" fill="none" stroke="#fff">
            <path d="M1212 13.500l4.500-4 4.500 4" strokeWidth="2.600" /><circle cx="1240.500" cy="11.500" r="3" strokeWidth="1.800" /><path d="M1238 14l-3 3.200" strokeWidth="2.400" />
            <text x="1259.500" y="17.500" fill="#fff" stroke="none" fontFamily="Open Sans" fontWeight="bold" fontSize="13.500">?</text>
            <circle cx="1283" cy="12.500" r="5" stroke="#c5cbcb" strokeWidth="4" strokeDasharray="2.900 1" /><circle cx="1283" cy="12.500" r="5" stroke="#3e4646" strokeWidth="1.300" />
          </svg>
        </MenuTools>
      </MenuBar>
      <RibbonBar />
      <Body>
        <Tree />
        <VSplit />
        <RightCol>
          <Upper>
            <Content>
              <TabStrip $h={25}>
                <Tab $w={54} $on>
                  <svg width="17" height="17" viewBox="0 0 17 17"><rect x="5.500" y="1" width="10" height="15" fill="#fff" stroke="#9aa0a4" /><path d="M8 8h6M8 10.500h6M8 13h6M12 4h2M12 6h2" stroke="#666" /><path d="M1 2l5-1 4 1v6l-4 3-5-2z" fill="#7fb9d4" stroke="#3f7f9d" /><path d="M1 2l4 1v7l-4-1z" fill="#c9eaf6" /></svg>
                  그
                </Tab>
                <Tab $w={36} $dx={9}><svg width="18" height="16" viewBox="0 0 18 16"><path d="M2 12.500V4.500l3 8v-8l3 8v-8l3 8v-7l3 7V6.500l2 6" stroke="#444" strokeWidth="1.800" fill="none" /></svg></Tab>
                <Tab $w={36} $dx={9}><svg width="18" height="17" viewBox="0 0 18 17" strokeWidth=".8" stroke="#8a8564"><path d="M1 15l4-5h12l-4 5z" fill="#f2cf6a" /><path d="M1 12l4-5h12l-4 5z" fill="#f8e7a8" /><path d="M1 9l4-6h12l-4 6z" fill="#fff" stroke="#888" /></svg></Tab>
                <Tab $w={36} $dx={9}><svg width="18" height="18" viewBox="0 0 18 18" fill="none" stroke="#444"><path d="M2 1v6M16 1v8M3 4h12M5 2L3 4l2 2M13 2l2 2-2 2" /><path d="M2 9h12v8H2zM6 9v8M10 9v8M2 13h12M7 11h2M11 11h2M3 15h2M11 15h2" strokeWidth="1.400" /></svg></Tab>
                <TabFill><Plus r={3} /></TabFill>
              </TabStrip>
              <Panel><Head><HeadCell $w={19} /><HeadCell>그림 컨텐트</HeadCell></Head></Panel>
            </Content>
            <VSplit />
            <View>
              <ViewTitle>그림 1</ViewTitle>
              <Canvas><Robot /></Canvas>
            </View>
          </Upper>
          <HSplit />
          <Lower>
            <TabStrip $h={25}>
              <Tab $w={92} $on $dx={9}><svg width="16" height="17" viewBox="0 0 16 17"><path d="M1 1h10l4 4v11H1z" fill="#f5f6f7" stroke="#9aa0a4" /><path d="M2.500 5h2M2.500 8h2M2.500 11h2" stroke="#e06a5a" strokeWidth="1.400" /><path d="M5 4h5M7 6h6M7 8h6M7 10h6M7 12h6M5 14h7" stroke="#555" strokeWidth="1.200" /></svg>항목 목록</Tab>
              <Tab $w={112} $dx={9}><svg width="18" height="18" viewBox="0 0 18 18"><text x="0" y="7.500" fontSize="10.500" fontWeight="bold" fontFamily="Open Sans" fill="#444">a</text><text x="5" y="16" fontSize="12" fontWeight="bold" fontFamily="Noto Sans CJK JP" fill="#333">あ</text><path d="M8 2h4v4M9.500 4.500L12 7l2.500-2.500" stroke="#1c6e94" strokeWidth="1.800" fill="none" /></svg>로컬리제이션</Tab>
              <Tab $w={64} $dx={10}><svg width="15" height="16" viewBox="0 0 15 16"><rect x=".5" y=".5" width="14" height="15" fill="#e9f1f5" stroke="#a9b4ba" /><path d="M2 3.500h3M2 8h3M2 12.500h3" stroke="#2c7796" strokeWidth="1.500" /><path d="M7 2.300h5.500v2.400H7zM7 6.800h5.500v2.400H7zM7 11.300h5.500v2.400H7z" fill="#fff" stroke="#2c7796" strokeWidth="1.200" /></svg>속성</Tab>
              <TabFill><Plus r={3} /></TabFill>
            </TabStrip>
            <Panel>
              <Head><HeadCell $w={33}><Tri $d="u" /></HeadCell><HeadCell $w={336}>ITM</HeadCell><HeadCell $w={336}>항목 태그</HeadCell><HeadCell>QTY</HeadCell></Head>
            </Panel>
          </Lower>
        </RightCol>
      </Body>
      <Status>
        <Toggle><MiniWin d="M5.500 3v13" /></Toggle>
        <Toggle><MiniWin d="M4.500 3v13M8.500 3v13M12 3v13" /></Toggle>
        <Toggle><MiniWin d="M1 10.500h15" /></Toggle>
        <Toggle $off><MiniWin /></Toggle>
        <Msg><span>중간=스핀</span><span>오른쪽=이동</span></Msg>
        <Seg $w={114}>표준: Creo Standard</Seg>
        <Seg $w={28}><Dot /></Seg>
        <Seg $w={33}>mm</Seg>
        <Seg $w={70}>1개 선택됨</Seg>
        <Select><span>스마트</span><SelArrow><Tri $d="d" $c="#5b6063" /></SelArrow></Select>
        <svg width="14" height="27" viewBox="0 0 14 27"><path d="M2 24L13 13M6 24l7-7M10 24l3-3" stroke="#b5babd" strokeWidth="1.500" /></svg>
      </Status>
      <ColorDialog />
    </Win>
  );
}
